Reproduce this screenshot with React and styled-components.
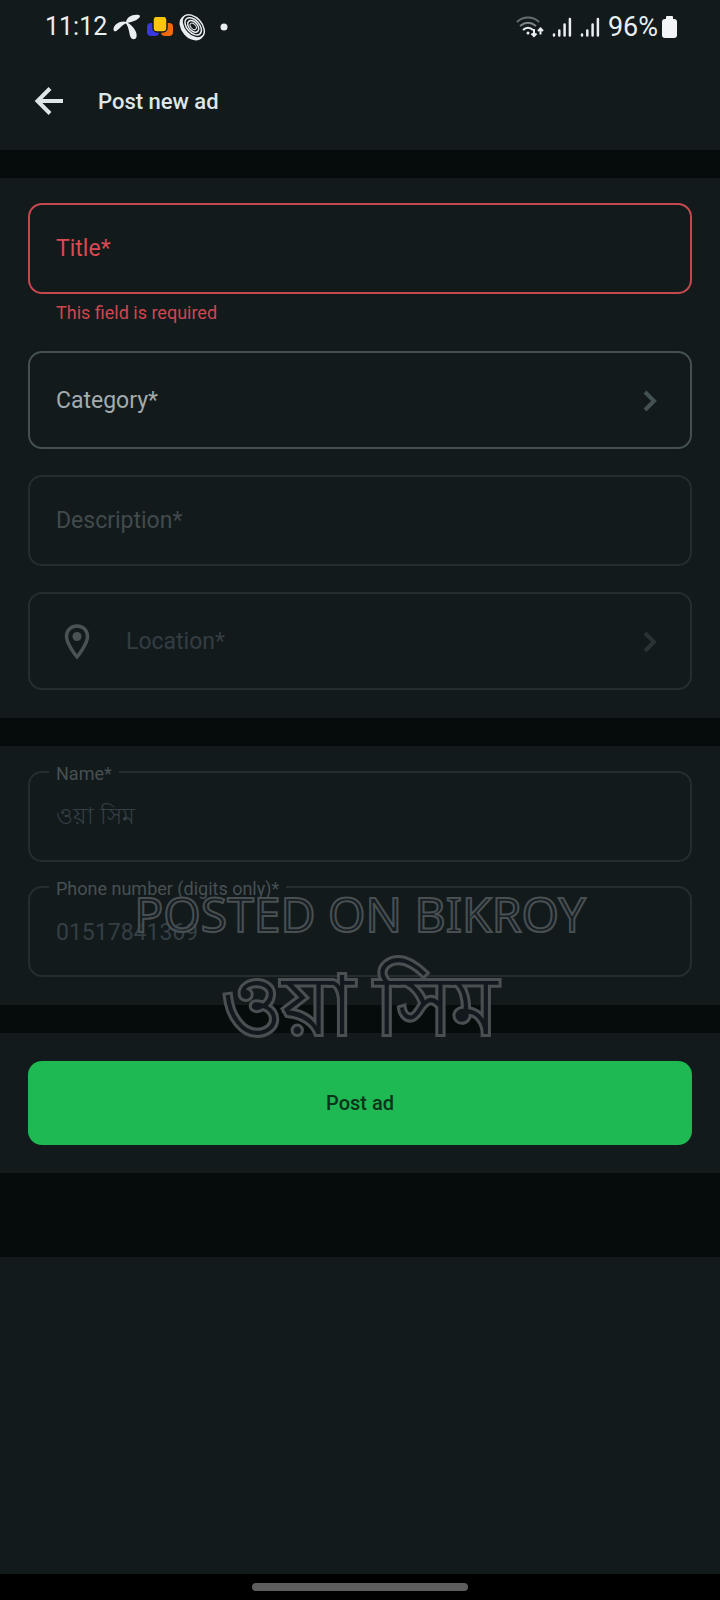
import React, { useState } from "react";
import styled, { createGlobalStyle } from "styled-components";

const GlobalStyle = createGlobalStyle`
   * {
      box-sizing: border-box;
   }
   body {
      margin: 0;
      background: #121a1c;
      font-family: Roboto, "Noto Sans", sans-serif;
   }
   button,
   input,
   textarea {
      font-family: inherit;
   }
`;

const Page = styled.div`
   display: flex;
   flex-direction: column;
   min-height: 100vh;
   background: #121a1c;
   color: #dfe6e7;
`;

const StatusBar = styled.div`
   display: flex;
   align-items: center;
   justify-content: space-between;
   height: 54px;
   padding: 0 43px 0 45px;
   line-height: 32px;
   color: #e9eff0;
`;

const StatusGroup = styled.div`
   display: flex;
   align-items: center;
   gap: ${(props) => props.$gap}px;
`;

const Clock = styled.span`
   font-size: 25px;
`;

const BatteryLevel = styled.span`
   font-size: 27px;
`;

const Header = styled.header`
   display: flex;
   align-items: center;
   gap: 34px;
   height: 96px;
   padding: 0 34px;
`;

const BackButton = styled.button`
   display: flex;
   padding: 0;
   border: 0;
   background: none;
   color: inherit;
`;

const PageTitle = styled.h1`
   margin: 0;
   font-size: 22px;
   line-height: 28px;
   font-weight: 500;
`;

const Divider = styled.div`
   height: ${(props) => (props.$large ? 84 : 28)}px;
   background: #060c0c;
`;

const Section = styled.section`
   position: relative;
   display: flex;
   flex-direction: column;
   gap: ${(props) => props.$gap}px;
   padding: 25px 28px 28px;
`;

const Outline = styled.div`
   position: relative;
   display: grid;
   align-items: center;
   height: 91px;
   border: 2px solid ${(props) => (props.$error ? "#c5484f" : "#242d2f")};
   border-radius: 14px;
`;

const RestingLabel = styled.label`
   grid-area: 1 / 1;
   padding: 0 26px;
   font-size: 23px;
   line-height: 28px;
   color: ${(props) => (props.$error ? "#d84a52" : "#424a4c")};
`;

const FloatingLabel = styled.label`
   position: absolute;
   top: -11px;
   left: 19px;
   padding: 0 7px;
   background: #121a1c;
   font-size: 18px;
   line-height: 24px;
   color: #485052;
`;

const Input = styled.input`
   grid-area: 1 / 1;
   width: 100%;
   height: 100%;
   padding: 2px 26px 0;
   border: 0;
   outline: 0;
   background: none;
   font-size: 23px;
   color: #e9eff0;

   &:disabled {
      color: #343f44;
   }
`;

const TextArea = styled(Input)`
   display: block;
   padding: 28px 26px;
   resize: none;
`;

const HelperText = styled.p`
   margin: 7px 0 0;
   padding: 0 28px;
   font-size: 18px;
   line-height: 24px;
   color: #d0464e;
`;

const Picker = styled.button`
   display: flex;
   align-items: center;
   height: 98px;
   padding: 2px 26px 0;
   border: 2px solid #435054;
   border-radius: 14px;
   background: none;
   font-size: 23px;
   line-height: 28px;
   text-align: left;
   color: #a4abac;

   &:disabled {
      border-color: #242d2f;
      color: #333d42;
   }
`;

const PickerText = styled.span`
   flex: 1;
`;

const PinSlot = styled.span`
   display: flex;
   justify-content: center;
   width: 42px;
   margin-right: 28px;
`;

const SubmitButton = styled.button`
   height: 84px;
   margin-top: 3px;
   border: 0;
   border-radius: 14px;
   background: #1eb953;
   font-size: 20px;
   font-weight: 500;
   color: #0b3318;
`;

const Watermark = styled.div`
   position: absolute;
   top: 138px;
   left: 0;
   right: 0;
   z-index: 1;
   text-align: center;
   font-family: "Noto Sans", sans-serif;
   pointer-events: none;
`;

const WatermarkLine = styled.div`
   font-size: 48px;
   line-height: 60px;
   color: rgba(24, 32, 40, 0.5);
   -webkit-text-stroke: 2px #484f51;
`;

const WatermarkName = styled.div`
   margin-top: 8px;
   font-size: 82px;
   line-height: 100px;
   color: #12191e;
   -webkit-text-stroke: 6px #4a5052;
   paint-order: stroke fill;
`;

const NavBar = styled.div`
   display: flex;
   justify-content: center;
   align-items: center;
   height: 26px;
   margin-top: auto;
   background: #000;
`;

const NavHandle = styled.div`
   width: 30%;
   height: 8px;
   border-radius: 4px;
   background: #5e5e5e;
`;

const FanIcon = () => (
   <svg width="28" height="26" viewBox="0 0 28 26" fill="#e9eff0">
      <path d="M13 8C14 3 19 0 26 1C27.500 1.300 27 3 26 4C23 7 18 8 14 9Z" />
      <path d="M14 8C8 6 1 10 0.500 15C0.500 17.500 2 18 4 16.500C8 13.500 10 10 14 9Z" />
      <path d="M13 8C18 10 25 17 23.500 23C22.500 26 19 26 17.500 23C16 19 16 13 12.500 9Z" />
   </svg>
);

const BlocksIcon = () => (
   <svg width="26" height="20" viewBox="0 0 26 20">
      <rect x="0" y="6" width="12" height="13" rx="4" fill="#3938dd" />
      <rect x="14" y="6" width="12" height="13" rx="4" fill="#f26a0c" />
      <rect
         x="6"
         y="-1"
         width="14"
         height="16"
         rx="4"
         fill="#fdc60a"
         stroke="#121a1c"
         strokeWidth="1.500"
      />
   </svg>
);

const DiscIcon = () => (
   <svg width="27" height="28" viewBox="0 0 28 28">
      <g transform="rotate(48 14 14)" fill="none" stroke="#e9eff0">
         <ellipse cx="14" cy="15" rx="15" ry="10.500" fill="#e9eff0" stroke="none" />
         <ellipse cx="14" cy="13" rx="14" ry="9" fill="#121a1c" strokeWidth="1.500" />
         <ellipse cx="14" cy="13" rx="10.500" ry="6.500" strokeWidth="1.500" />
         <ellipse cx="14" cy="13" rx="7" ry="4.500" strokeWidth="1.500" />
         <ellipse cx="14" cy="13" rx="4" ry="2.500" strokeWidth="1" />
      </g>
   </svg>
);

const DotIcon = () => (
   <svg width="8" height="8" viewBox="0 0 8 8">
      <circle cx="4" cy="4" r="3.500" fill="#e9eff0" />
   </svg>
);

const WifiIcon = () => (
   <svg width="28" height="22" viewBox="0 0 28 22" fill="none" strokeWidth="2">
      <path d="M1 6C7 0 17 0 23 6" stroke="#667072" />
      <path d="M4 10C9 6 15 6 20 10" stroke="#7d8688" />
      <path d="M7 14C10 11 14 11 17 14" stroke="#e9eff0" />
      <circle cx="12" cy="17" r="1.500" fill="#e9eff0" />
      <path
         d="M18 13V20M15.500 17.500L18 20L20.500 17.500M24.500 18.500V12.500M22 15L24.500 12.500L27 15"
         stroke="#e9eff0"
      />
   </svg>
);

const SignalIcon = () => (
   <svg
      width="20"
      height="22"
      viewBox="0 0 20 22"
      stroke="#e9eff0"
      strokeWidth="2.500"
      strokeLinecap="round"
   >
      <path d="M2 19.500V18.500M7.300 19.500V14.500M12.600 19.500V8.500M17.900 19.500V3" />
   </svg>
);

const BatteryIcon = () => (
   <svg width="15" height="22" viewBox="0 0 15 22" fill="#f3f6f6">
      <rect x="4" y="0" width="7" height="5" rx="1" />
      <rect x="0" y="3" width="15" height="19" rx="3" />
   </svg>
);

const BackIcon = () => (
   <svg width="30" height="30" viewBox="0 0 30 30" fill="none" stroke="currentColor" strokeWidth="4">
      <path d="M29 14H4M16 1.500L3.500 14L16 26.500" />
   </svg>
);

const ChevronIcon = ({ color }) => (
   <svg width="28" height="28" viewBox="0 0 28 28" fill="none" stroke={color} strokeWidth="4">
      <path d="M9 5L18 14L9 23" />
   </svg>
);

const PinIcon = () => (
   <svg width="26" height="36" viewBox="0 0 26 36">
      <path
         d="M13 2C6.500 2 2.500 6.800 2.500 12.500C2.500 20 13 33 13 33C13 33 23.500 20 23.500 12.500C23.500 6.800 19.500 2 13 2Z"
         fill="none"
         stroke="#4a5254"
         strokeWidth="3.500"
      />
      <circle cx="13" cy="12.500" r="4.500" fill="#4a5254" />
   </svg>
);

export default function App() {
   const [title, setTitle] = useState("");

   return (
      <Page>
         <GlobalStyle />
         <StatusBar>
            <StatusGroup $gap={14}>
               <StatusGroup $gap={6}>
                  <Clock>11:12</Clock>
                  <FanIcon />
                  <BlocksIcon />
                  <DiscIcon />
               </StatusGroup>
               <DotIcon />
            </StatusGroup>
            <StatusGroup $gap={8}>
               <WifiIcon />
               <SignalIcon />
               <SignalIcon />
               <StatusGroup $gap={4}>
                  <BatteryLevel>96%</BatteryLevel>
                  <BatteryIcon />
               </StatusGroup>
            </StatusGroup>
         </StatusBar>
         <Header>
            <BackButton type="button" aria-label="Back">
               <BackIcon />
            </BackButton>
            <PageTitle>Post new ad</PageTitle>
         </Header>
         <Divider />
         <Section $gap={26}>
            <div>
               <Outline $error>
                  {!title && (
                     <RestingLabel htmlFor="title" $error>
                        Title*
                     </RestingLabel>
                  )}
                  <Input
                     id="title"
                     aria-label="Title"
                     value={title}
                     onChange={(e) => setTitle(e.target.value)}
                  />
               </Outline>
               <HelperText>This field is required</HelperText>
            </div>
            <Picker type="button">
               <PickerText>Category*</PickerText>
               <ChevronIcon color="#435054" />
            </Picker>
            <Outline>
               <RestingLabel htmlFor="description">Description*</RestingLabel>
               <TextArea as="textarea" id="description" disabled />
            </Outline>
            <Picker type="button" disabled>
               <PinSlot>
                  <PinIcon />
               </PinSlot>
               <PickerText>Location*</PickerText>
               <ChevronIcon color="#293234" />
            </Picker>
         </Section>
         <Divider />
         <Section $gap={24}>
            <Outline>
               <FloatingLabel htmlFor="name">Name*</FloatingLabel>
               <Input id="name" defaultValue="ওয়া সিম" disabled />
            </Outline>
            <Outline>
               <FloatingLabel htmlFor="phone">Phone number (digits only)*</FloatingLabel>
               <Input id="phone" type="tel" defaultValue="01517841369" disabled />
            </Outline>
            <Watermark>
               <WatermarkLine>POSTED ON BIKROY</WatermarkLine>
               <WatermarkName>ওয়া সিম</WatermarkName>
            </Watermark>
         </Section>
         <Divider />
         <Section $gap={0}>
            <SubmitButton type="button">Post ad</SubmitButton>
         </Section>
         <Divider $large />
         <NavBar>
            <NavHandle />
         </NavBar>
      </Page>
   );
}
